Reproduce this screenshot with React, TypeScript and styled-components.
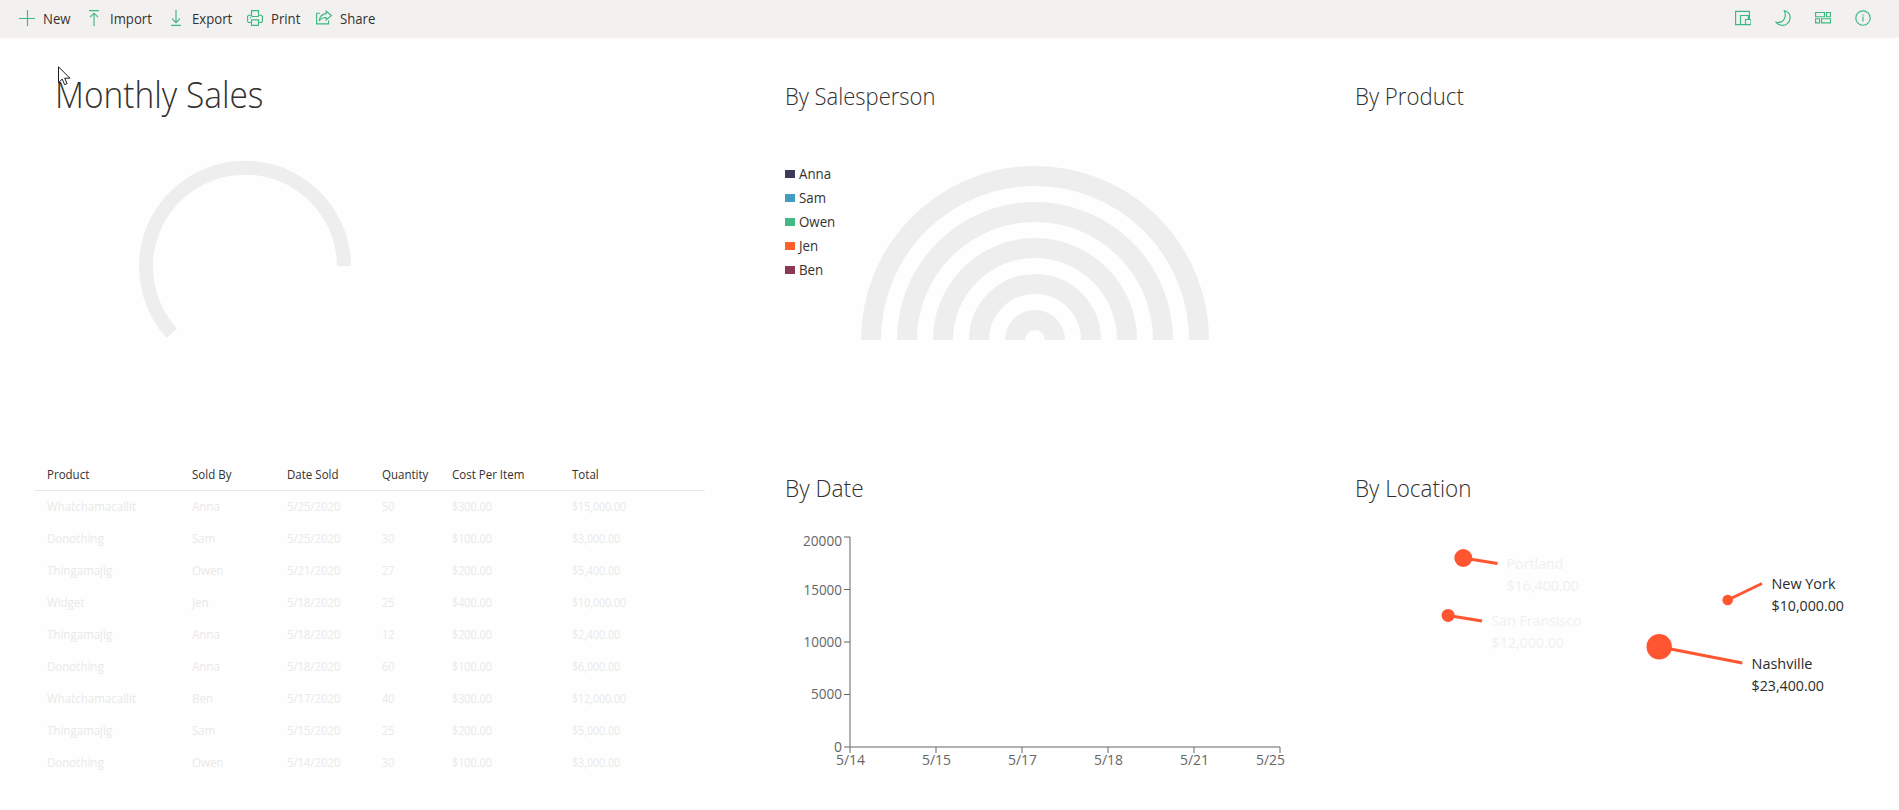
import React from "react";
import styled, { createGlobalStyle } from "styled-components";

const Global = createGlobalStyle`
  body { margin: 0; background: #fefefe; }
  #root { font-family: "Open Sans", "Noto Sans", sans-serif; color: #323130; }
`;

const GREEN = "#3cb981";
const TRACK = "#eeeeee";
const FLAME = "#ff5530";

const Page = styled.div`
  position: relative;
  width: 1899px;
  height: 810px;
  overflow: hidden;
`;
const Toolbar = styled.header`
  display: flex;
  justify-content: space-between;
  height: 38px;
  padding: 0 28px 0 19px;
  background: #f3f1f0;
`;
const Commands = styled.div`
  display: flex;
`;
const FarCommands = styled.div`
  display: flex;
  align-items: center;
  gap: 24px;
`;
const Command = styled.button<{ $width: number }>`
  display: flex;
  align-items: center;
  gap: 8px;
  width: ${(p) => p.$width}px;
  padding: 0;
  border: 0;
  background: none;
  font: inherit;
  font-size: 14px;
  line-height: 38px;
  color: #323130;
  white-space: nowrap;
`;
/* Condenses a run of text from its left edge. */
const Narrow = styled.span<{ $scale: number }>`
  display: inline-block;
  transform: scaleX(${(p) => p.$scale});
  transform-origin: 0 50%;
  white-space: nowrap;
`;
const Glyph = styled.svg`
  flex: none;
  width: 16px;
  height: 16px;
  margin-top: -2px;
  fill: none;
  stroke: ${GREEN};
  stroke-width: 1.15;
`;
const Dashboard = styled.main`
  display: grid;
  grid-template-columns: 750px 570px 1fr;
  grid-template-rows: 392px 380px;
  padding-left: 35px;
`;
const Panel = styled.section`
  display: flex;
  flex-direction: column;
  align-items: flex-start;
`;
const PageTitle = styled.h1`
  margin: 0;
  padding: 33px 0 0 20px;
  font-size: 36px;
  line-height: 48px;
  font-weight: 300;
`;
const PanelTitle = styled.h2`
  margin: 0;
  padding-top: 41px;
  font-size: 24px;
  line-height: 34px;
  font-weight: 300;
`;
const Gauge = styled.svg`
  margin: 41px 0 0 104px;
`;
const RadialRow = styled.div`
  display: flex;
  padding-top: 49px;
`;
const Legend = styled.ul`
  width: 76px;
  margin: -1px 0 0;
  padding: 0;
  list-style: none;
`;
const LegendItem = styled.li`
  display: flex;
  align-items: center;
  gap: 4px;
  height: 24px;
  font-size: 14px;
`;
const Swatch = styled.span<{ $color: string }>`
  width: 10px;
  height: 8px;
  margin-top: 2px;
  background: ${(p) => p.$color};
`;
const Radial = styled.svg`
  margin-top: 4px;
`;
const Table = styled.div`
  width: 670px;
  padding-top: 28px;
  font-size: 12px;
`;
const Row = styled.div`
  display: grid;
  grid-template-columns: 145px 95px 95px 70px 120px 1fr;
  justify-items: start;
  box-sizing: border-box;
  padding-left: 12px;
  height: 32px;
  line-height: 31px;
  color: #e9e9e9;
`;
const HeadRow = styled(Row)`
  height: 33px;
  line-height: 34px;
  border-bottom: 1px solid #e8e8e8;
  color: #323130;
  font-weight: 500;
`;
const DateChart = styled.svg`
  margin-top: 25px;
`;
const Tick = styled.text`
  font-size: 14px;
  fill: #666;
`;
const MapCanvas = styled.svg`
  margin-top: 25px;
`;
const PinText = styled.text<{ $dim?: boolean }>`
  font-size: 15px;
  fill: ${(p) => (p.$dim ? "#f0f0f0" : "#2b2b2b")};
`;
const Pointer = styled.svg`
  position: absolute;
  left: 58px;
  top: 66px;
`;

const icons = {
  add: <path d="M0 8.5H16M8.5 0V16" />,
  up: <path d="M3 .6H13M8 16V3.2M4 7.2L8 3.2L12 7.2" />,
  down: <path d="M3 15.4H13M8 0V12.6M4 8.6L8 12.6L12 8.6" />,
  print: (
    <path d="M4.5 6.5V.6H11.5V6.5M4.5 12.5H1.5L.6 11.6V6.3L1.8 5.2H4.5M11.5 5.2H14.2L15.4 6.3V11.6L14.5 12.5H11.5M3 7.6H4M4.5 9.8H11.5V15.4H4.5ZM4.5 6.5H11.5" />
  ),
  share: (
    <path d="M4 3.2H.6V13.8H12.6V10.4M10.2 1.2L15.4 5.6L10.2 10V7.5C6.8 7.4 4.8 8.4 3.3 11C3.6 6.7 6 4 10.2 3.6Z" />
  ),
  sizes: (
    <path d="M14.4 9V1.4H.6V14.6H5.5M5.5 14.6V5.5H13.3V9M5.5 14.6H10.5M10.5 9.5H16V14.6H10.5Z" />
  ),
  moon: (
    <path d="M9.3 .7C13.4 1.6 15.3 4.8 15.1 8.1C14.8 12.8 10.8 15.6 6.8 15.3C4.2 15.1 2.2 14 .9 12.2C4.9 12.9 8.3 11.1 9.6 8.2C10.7 5.7 10.4 3 9.3 .7Z" />
  ),
  tiles: <path d="M.6 2.5H9.5V6.7H.6ZM11.5 2.5H15.5V6.7H11.5ZM.6 8.7H4.6V12.9H.6ZM6.6 8.7H15.5V12.9H6.6Z" />,
  info: (
    <>
      <circle cx="8" cy="8" r="7.2" />
      <path d="M8 6.6V11.6M8 4.2V5.6" />
    </>
  ),
};

const commands = [
  { icon: icons.add, label: "New", width: 66.5 },
  { icon: icons.up, label: "Import", width: 82 },
  { icon: icons.down, label: "Export", width: 79.5 },
  { icon: icons.print, label: "Print", width: 69 },
  { icon: icons.share, label: "Share", width: 66 },
];

const people = [
  ["Anna", "#393a5c"],
  ["Sam", "#429dc0"],
  ["Owen", "#45b983"],
  ["Jen", "#ff602b"],
  ["Ben", "#883955"],
];

const columnScale = [0.96, 0.96, 0.94, 0.91, 0.9, 0.885];

const sales = [
  ["Whatchamacallit", "Anna", "5/25/2020", "50", "$300.00", "$15,000.00"],
  ["Donothing", "Sam", "5/25/2020", "30", "$100.00", "$3,000.00"],
  ["Thingamajig", "Owen", "5/21/2020", "27", "$200.00", "$5,400.00"],
  ["Widget", "Jen", "5/18/2020", "25", "$400.00", "$10,000.00"],
  ["Thingamajig", "Anna", "5/18/2020", "12", "$200.00", "$2,400.00"],
  ["Donothing", "Anna", "5/18/2020", "60", "$100.00", "$6,000.00"],
  ["Whatchamacallit", "Ben", "5/17/2020", "40", "$300.00", "$12,000.00"],
  ["Thingamajig", "Sam", "5/15/2020", "25", "$200.00", "$5,000.00"],
  ["Donothing", "Owen", "5/14/2020", "30", "$100.00", "$3,000.00"],
];

const yTicks = [
  { label: "20000", y: 7, base: 16, length: 39 },
  { label: "15000", y: 59.5, base: 64.5, length: 38.5 },
  { label: "10000", y: 112, base: 117, length: 38.5 },
  { label: "5000", y: 164.5, base: 169, length: 31 },
  { label: "0", y: 217, base: 222, length: 8 },
];
const xTicks = [
  { label: "5/14", x: 65, start: 51 },
  { label: "5/15", x: 151, start: 137 },
  { label: "5/17", x: 237, start: 223 },
  { label: "5/18", x: 323, start: 309 },
  { label: "5/21", x: 409, start: 395 },
  { label: "5/25", x: 495, start: 471 },
];

const pins = [
  { city: "Portland", total: "$16,400.00", dim: true, cx: 108.3, cy: 28, r: 9, ex: 142.5, ey: 33.5, tx: 151.5, ty: 39, len: 57 },
  { city: "San Fransisco", total: "$12,000.00", dim: true, cx: 93.1, cy: 85.4, r: 6.5, ex: 127, ey: 91, tx: 136.5, ty: 96, len: 90 },
  { city: "New York", total: "$10,000.00", dim: false, cx: 372.7, cy: 70, r: 5.3, ex: 407, ey: 53.5, tx: 416.5, ty: 59, len: 64 },
  { city: "Nashville", total: "$23,400.00", dim: false, cx: 304.2, cy: 116.8, r: 12.7, ex: 387.3, ey: 133, tx: 396.5, ty: 139, len: 61 },
];

export default function App() {
  return (
    <Page>
      <Global />
      <Toolbar>
        <Commands>
          {commands.map((c) => (
            <Command key={c.label} $width={c.width}>
              <Glyph viewBox="0 0 16 16">{c.icon}</Glyph>
              <Narrow $scale={0.94}>{c.label}</Narrow>
            </Command>
          ))}
        </Commands>
        <FarCommands>
          {[icons.sizes, icons.moon, icons.tiles, icons.info].map((icon, i) => (
            <Glyph key={i} viewBox="0 0 16 16">{icon}</Glyph>
          ))}
        </FarCommands>
      </Toolbar>
      <Dashboard>
        <Panel>
          <PageTitle>
            <Narrow $scale={0.93}>Monthly Sales</Narrow>
          </PageTitle>
          <Gauge width="212" height="180">
            <path d="M32.8 173.3A99 99 0 1 1 205 106" fill="none" stroke={TRACK} strokeWidth="14" />
          </Gauge>
        </Panel>
        <Panel>
          <PanelTitle>
            <Narrow $scale={0.917}>By Salesperson</Narrow>
          </PanelTitle>
          <RadialRow>
            <Legend>
              {people.map(([name, color]) => (
                <LegendItem key={name}>
                  <Swatch $color={color} />
                  <Narrow $scale={0.95}>{name}</Narrow>
                </LegendItem>
              ))}
            </Legend>
            <Radial width="348" height="174">
              {[164, 128, 92, 56, 20].map((r) => (
                <circle key={r} cx="174" cy="174" r={r} fill="none" stroke={TRACK} strokeWidth="20" />
              ))}
            </Radial>
          </RadialRow>
        </Panel>
        <Panel>
          <PanelTitle>
            <Narrow $scale={0.925}>By Product</Narrow>
          </PanelTitle>
        </Panel>
        <Panel>
          <Table>
            <HeadRow>
              {["Product", "Sold By", "Date Sold", "Quantity", "Cost Per Item", "Total"].map((h) => (
                <Narrow key={h} $scale={0.96}>{h}</Narrow>
              ))}
            </HeadRow>
            {sales.map((row, i) => (
              <Row key={i}>
                {row.map((cell, j) => (
                  <Narrow key={j} $scale={columnScale[j]}>{cell}</Narrow>
                ))}
              </Row>
            ))}
          </Table>
        </Panel>
        <Panel>
          <PanelTitle>
            <Narrow $scale={0.945}>By Date</Narrow>
          </PanelTitle>
          <DateChart width="520" height="250">
            <g stroke="#666" fill="none">
              <path d="M65 7V217M65 217H495" />
              {yTicks.map((t) => (
                <path key={t.label} d={`M59 ${t.y}H65`} />
              ))}
              {xTicks.map((t) => (
                <path key={t.label} d={`M${t.x} 217V223`} />
              ))}
            </g>
            {yTicks.map((t) => (
              <Tick key={t.label} x={57 - t.length} y={t.base} textLength={t.length} lengthAdjust="spacingAndGlyphs">
                {t.label}
              </Tick>
            ))}
            {xTicks.map((t) => (
              <Tick key={t.label} x={t.start} y={235} textLength={29} lengthAdjust="spacingAndGlyphs">
                {t.label}
              </Tick>
            ))}
          </DateChart>
        </Panel>
        <Panel>
          <PanelTitle>
            <Narrow $scale={0.935}>By Location</Narrow>
          </PanelTitle>
          <MapCanvas width="520" height="250">
            {pins.map((p) => (
              <g key={p.city}>
                <circle cx={p.cx} cy={p.cy} r={p.r} fill={FLAME} />
                <path d={`M${p.cx} ${p.cy}L${p.ex} ${p.ey}`} stroke={FLAME} strokeWidth="3" />
                <PinText $dim={p.dim} x={p.tx} y={p.ty} textLength={p.len} lengthAdjust="spacingAndGlyphs">
                  {p.city}
                </PinText>
                <PinText $dim={p.dim} x={p.tx} y={p.ty + 22} textLength={72.5} lengthAdjust="spacingAndGlyphs">
                  {p.total}
                </PinText>
              </g>
            ))}
          </MapCanvas>
        </Panel>
      </Dashboard>
      <Pointer width="13" height="20">
        <path d="M.5 .8V16.6L4.2 13.1L6.7 18.7L9.1 17.6L6.7 12.2H11.9Z" fill="#fff" stroke="#1c1c24" />
      </Pointer>
    </Page>
  );
}
